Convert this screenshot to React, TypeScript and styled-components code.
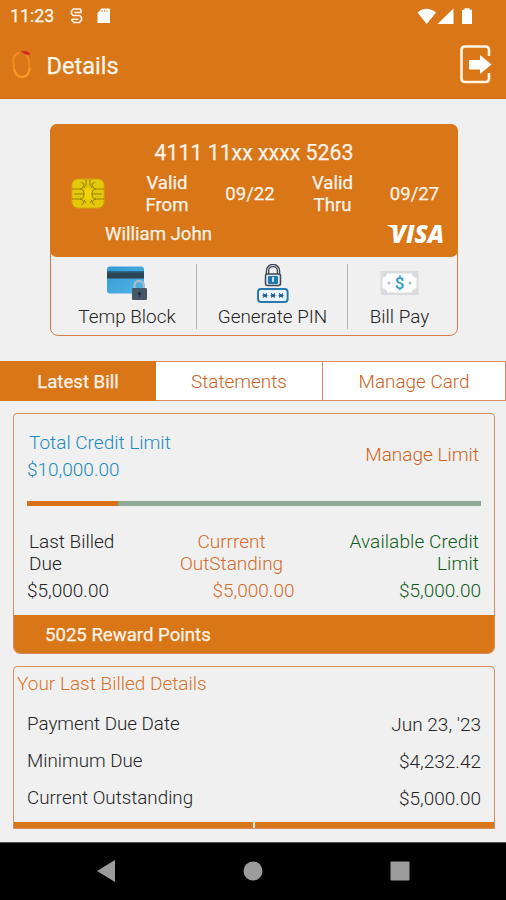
import React from "react";
import styled, { createGlobalStyle } from "styled-components";

const ORANGE = "#d97617";
const EDGE = "#d98a62";
const PAGE = "#f0f0f0";

const GlobalStyle = createGlobalStyle`
  * { box-sizing: border-box; }
  body { margin: 0; background: ${PAGE}; }
`;

const Screen = styled.div`
  width: 506px;
  height: 900px;
  display: flex;
  flex-direction: column;
  overflow: hidden;
  background: ${PAGE};
  color: #242424;
  font: 300 19px/22px Roboto, sans-serif;
  white-space: nowrap;
  svg { display: block; flex: none; }
`;

const Header = styled.header`
  height: 99px;
  flex: none;
  background: ${ORANGE};
  border-bottom: 1px solid #c4701f;
  color: #fff6ec;
  -webkit-text-stroke: 0.25px;
`;

const StatusBar = styled.div`
  height: 32px;
  display: flex;
  align-items: center;
  padding: 0 32px 0 10px;
  font-size: 17.8px;
  font-weight: 400;
`;

const StatusIcons = styled.div<{ $end?: boolean }>`
  display: flex;
  margin-left: ${(p) => (p.$end ? "auto" : "15.7px")};
`;

const TitleBar = styled.div`
  height: 66px;
  display: flex;
  align-items: center;
  padding: 0 13px 0 11px;
`;

const Title = styled.h1`
  margin: 1px auto 0 13.5px;
  font-size: 23.6px;
  font-weight: 400;
  line-height: 28px;
`;

const CardBox = styled.section`
  flex: none;
  width: 408px;
  height: 212px;
  margin: 25px 0 0 50px;
  border: 1px solid #d97e49;
  border-radius: 8px;
`;

const CardFace = styled.div`
  height: 133px;
  margin: -1px -1px 0;
  padding-top: 17px;
  border-radius: 7px;
  background: ${ORANGE};
  color: #fff3ea;
  font-size: 18.6px;
  font-weight: 400;
  -webkit-text-stroke: 0.25px;
`;

const CardNumber = styled.div`
  padding-left: 104.5px;
  font-size: 21.3px;
  line-height: 24px;
`;

const CardDates = styled.div`
  height: 43px;
  margin-top: 8px;
  display: grid;
  grid-template-columns: 79px 76px 90px 75px 89px;
  align-items: center;
  text-align: center;
  line-height: 21.5px;
  svg { margin: -2px 0 0 21px; }
`;

const CardFooter = styled.div`
  display: flex;
  justify-content: space-between;
  align-items: center;
  height: 35px;
  padding: 0 13px 0 55px;
`;

const Actions = styled.div`
  display: grid;
  grid-template-columns: 146px 151px 109px;
  padding-top: 7px;
`;

const Action = styled.button`
  height: 65px;
  padding: 0 0 0 1px;
  border: 0;
  border-right: 1px solid #b4b4b4;
  background: none;
  font: inherit;
  font-size: 18.9px;
  color: inherit;
  display: flex;
  flex-direction: column;
  align-items: center;
  gap: 1px;
  &:last-child { border: 0; padding: 0 6px 0 0; }
  &:first-child { padding-left: 7px; }
`;

const Tabs = styled.nav`
  flex: none;
  display: grid;
  grid-template-columns: 156px 167px 183px;
  height: 40px;
  margin-top: 25px;
  border: solid ${EDGE};
  border-width: 1px 0;
`;

const Tab = styled.button<{ $active?: boolean }>`
  margin: ${(p) => (p.$active ? "-1px 0" : "0")};
  padding: 2px 0 0;
  border: solid ${EDGE};
  border-width: ${(p) => (p.$active ? "0" : "0 1px 0 0")};
  background: ${(p) => (p.$active ? ORANGE : "#fff")};
  color: ${(p) => (p.$active ? "#fff3ea" : "#cc5f1c")};
  font: inherit;
  font-weight: ${(p) => (p.$active ? 400 : 300)};
  font-size: ${(p) => (p.$active ? "18.6px" : "18.9px")};
  -webkit-text-stroke: ${(p) => (p.$active ? "0.25px" : "0")};
`;

const Panel = styled.section<{ $height: number; $flat?: boolean }>`
  flex: none;
  display: flex;
  flex-direction: column;
  width: 482px;
  height: ${(p) => p.$height}px;
  margin: 12px 0 0 13px;
  border: 1px solid ${EDGE};
  border-radius: ${(p) => (p.$flat ? "4px 4px 0 0" : "4px 4px 7px 7px")};
  overflow: hidden;
`;

const LimitRow = styled.div`
  display: flex;
  justify-content: space-between;
  padding: 18px 15px 0 13px;
`;

const Limit = styled.div`
  color: #1b8bba;
  line-height: 27px;
  margin-top: -3px;
  div:first-child { padding-left: 2px; }
`;

const ManageLink = styled.a`
  color: #cf6420;
  padding-top: 12px;
`;

const Meter = styled.div`
  height: 5px;
  margin: 18px 13px 0;
  background: #8fa998;
`;

const MeterFill = styled.div`
  width: 91px;
  height: 5px;
  background: #db7016;
`;

const Columns = styled.div`
  display: grid;
  grid-template-columns: 127px 155px 172px;
  padding: 25px 13px 0;
`;

const Column = styled.div<{ $align: string; $color: string }>`
  text-align: ${(p) => p.$align};
  color: ${(p) => p.$color};
`;

const ColumnLabel = styled.div<{ $wide?: boolean }>`
  padding: 0 2px;
  letter-spacing: ${(p) => (p.$wide ? "0.1px" : "normal")};
`;

const ColumnAmount = styled.div<{ $shift?: boolean }>`
  margin-top: 5px;
  padding-left: ${(p) => (p.$shift ? "44px" : "0")};
`;

const Rewards = styled.div`
  margin: auto -1px -1px;
  height: 39px;
  padding: 0 32px;
  background: ${ORANGE};
  color: #fff3ea;
  font-size: 18.6px;
  font-weight: 400;
  line-height: 40px;
  -webkit-text-stroke: 0.25px;
`;

const DetailsTitle = styled.h2`
  margin: 6px 0 10.5px 3px;
  font: inherit;
  color: #d9722b;
`;

const DetailRow = styled.div`
  display: flex;
  justify-content: space-between;
  padding: 0 13px;
  font-size: 18.8px;
  line-height: 37.4px;
  span:last-child { font-size: 19px; }
`;

const FooterBars = styled.div`
  display: grid;
  grid-template-columns: 1fr 1fr;
  gap: 2px;
  margin: auto -1px -1px;
`;

const FooterBar = styled.div`
  height: 7px;
  background: ${ORANGE};
`;

const NavBar = styled.footer`
  margin-top: auto;
  height: 58px;
  flex: none;
  display: flex;
  align-items: center;
  justify-content: space-between;
  padding: 0 96px 2px 96px;
  background: #000;
  border-top: 1px solid #555;
`;

const StatusLeft = () => (
  <StatusIcons>
    <svg width="42" height="18" viewBox="0 0 42 18" fill="none">
      <path d="M11 6V3L10 2H3.500L1.500 4v2.500l1.500 2h7l1.500 2V13l-2 2.500H4L2 13.500V12" stroke="#fff3ea" strokeWidth="1.700" />
      <path d="M4.500 5.500H11M2 12.300h6.500" stroke="#fff3ea" strokeWidth="1.400" />
      <path d="M31.500 1.500H39a1 1 0 0 1 1 1V16H27.500V6z" fill="#fff" />
      <path d="M32 3v2M34.500 3v2M37 3v2" stroke={ORANGE} strokeWidth=".8" />
    </svg>
  </StatusIcons>
);

const StatusRight = () => (
  <StatusIcons $end>
    <svg width="57" height="18" viewBox="0 0 57 18" fill="#fff">
      <path d="M.5 5.500Q9.500-2 19 5.500L9.700 17z" />
      <path d="M36.500 1.500V17H20.500z" />
      <path d="M47.500 1.200h5v1.500h2.500V17H45V2.700h2.500z" />
    </svg>
  </StatusIcons>
);

const Logo = () => (
  <svg width="22" height="30" viewBox="0 0 22 30" fill="none" strokeLinecap="round">
    <path d="M8 3C3 4 1.500 9 2.500 13c.5 2 0 4 .5 6 1 5 4 8 8 8 6 0 8-5 7.500-10C18.500 9 17 6 14 4" stroke="#f58d1c" strokeWidth="1.900" />
    <path d="M3.500 20c1 4 4 7 7.500 7s6.500-3 7.500-8" stroke="#fa9a25" strokeWidth="2.200" />
    <path d="M11 1.500c3-.3 6 0 8 2.500-3 .8-6 .3-8-2.500z" fill="#d52332" stroke="#d52332" strokeWidth=".8" />
  </svg>
);

const ExitIcon = () => (
  <svg width="33" height="40" viewBox="0 0 33 40">
    <path d="M29 11V5Q29 1.500 25.500 1.500H5Q1.500 1.500 1.500 5V33.500Q1.500 37 5 37H25.500Q29 37 29 33.500V28" fill="none" stroke="#fff3e4" strokeWidth="2.600" />
    <path d="M10 15H20V10L31.500 19.500 20 29V24.500H10Q9 24.500 9 23.500V16Q9 15 10 15z" fill="#fff" />
  </svg>
);

const Chip = () => (
  <svg width="34" height="31" viewBox="0 0 34 31" fill="none">
    <rect x="1" y="1" width="32" height="29" rx="6" fill="#e6c80b" stroke="#d3a80b" />
    <g stroke="#94820c" strokeWidth="1">
      <path d="M1 11h8q3 0 4-4V6l-3-2M33 11h-8q-3 0-4-4V6l3-2M1 21h8q3 0 4 4l-3 2M33 21h-8q-3 0-4 4l3 2M3 16h10M31 16H21" />
      <path d="M9 11q4 0 4 5t-4 5M25 11q-4 0-4 5t4 5" />
      <path d="M15 1v6l-2 3M19 1v6l2 3M13 22l2 3M21 22l-2 3" />
    </g>
    <rect x="14" y="11" width="6" height="10" rx="2.500" fill="#f2d60a" />
  </svg>
);

const VisaText = styled.text`
  font: italic 800 24.500px "Open Sans", sans-serif;
  fill: #fff;
`;

const Visa = () => (
  <svg width="62" height="42" viewBox="0 -10 62 42">
    <path d="M4.500 2H12L13.500 10Q11 4.500 4.500 2.700z" fill="#fff" />
    <VisaText x="8" y="19.500" textLength="53" lengthAdjust="spacingAndGlyphs">VISA</VisaText>
  </svg>
);

const BlockIcon = () => (
  <svg width="42" height="41" viewBox="0 0 42 41">
    <defs>
      <linearGradient id="blue" x2="1" y2="1"><stop stopColor="#319bd3" /><stop offset="1" stopColor="#55b4e6" /></linearGradient>
    </defs>
    <rect x="1" y="2.500" width="37" height="27" rx="3" fill="url(#blue)" />
    <path d="M1 7h37v7.500H1z" fill="#2b4555" />
    <path d="M1 7h37v1.500H1z" fill="#28688e" />
    <path d="M28.500 25v-3.500a4.700 4.700 0 0 1 9.400 0V25" fill="none" stroke="#a9bdc8" strokeWidth="2.200" />
    <rect x="26" y="24" width="15" height="12" rx="1" fill="#465767" />
    <circle cx="33.500" cy="29.500" r="1.600" fill="#202d3a" />
    <path d="M33 30h1v3h-1z" fill="#202d3a" />
  </svg>
);

const PinIcon = () => (
  <svg width="34" height="41" viewBox="0 0 34 41" fill="none">
    <path d="M11.500 12V7a5.500 5.500 0 0 1 11 0V12" stroke="#3e4658" strokeWidth="3.600" />
    <path d="M11.500 12V7a5.500 5.500 0 0 1 11 0V12" stroke="#d7e0e6" strokeWidth="1" />
    <rect x="9.500" y="10" width="15" height="11.500" rx="2" fill="#deebf4" stroke="#3e4658" strokeWidth="1.500" />
    <rect x="12" y="12" width="10" height="8" rx="1" fill="#2377ad" />
    <path d="M17 13v5" stroke="#fff" strokeWidth="1.500" />
    <rect x="2" y="25" width="29.600" height="13" rx="3" fill="#eaf5fb" stroke="#2879ae" strokeWidth="2" />
    <path d="M7 29.500l4 4m0-4l-4 4M6.500 31.500h5M15 29.500l4 4m0-4l-4 4M14.500 31.500h5M23 29.500l4 4m0-4l-4 4M22.500 31.500h5" stroke="#255f91" strokeWidth="1.100" />
  </svg>
);

const DollarText = styled.text`
  font: 500 17px Roboto, sans-serif;
  fill: #2c9bd0;
`;

const BillIcon = () => (
  <svg width="40" height="41" viewBox="0 0 40 41">
    <rect x=".5" y="7" width="38" height="24" fill="#dadbdc" />
    <path d="M7 9.500h25q0 4 4.500 4v11q-4.500 0-4.500 4H7q0-4-4.500-4v-11q4.500 0 4.500-4z" fill="#fff" />
    <circle cx="9" cy="19" r="1.500" fill="#b4b9bc" />
    <circle cx="30" cy="19" r="1.500" fill="#b4b9bc" />
    <DollarText x="19.500" y="25" textAnchor="middle">$</DollarText>
  </svg>
);

const COLUMNS = [
  { lines: ["Last Billed", "Due"], align: "left", color: "#242424" },
  { lines: ["Currrent", "OutStanding"], align: "center", color: "#d76b2b" },
  { lines: ["Available Credit", "Limit"], align: "right", color: "#115c1c" },
];

const DETAILS = [
  ["Payment Due Date", "Jun 23, '23"],
  ["Minimum Due", "$4,232.42"],
  ["Current Outstanding", "$5,000.00"],
];

export default function App() {
  return (
    <Screen>
      <GlobalStyle />
      <Header>
        <StatusBar>
          11:23
          <StatusLeft />
          <StatusRight />
        </StatusBar>
        <TitleBar>
          <Logo />
          <Title>Details</Title>
          <ExitIcon />
        </TitleBar>
      </Header>

      <CardBox>
        <CardFace>
          <CardNumber>4111 11xx xxxx 5263</CardNumber>
          <CardDates>
            <Chip />
            <span>Valid<br />From</span>
            <span>09/22</span>
            <span>Valid<br />Thru</span>
            <span>09/27</span>
          </CardDates>
          <CardFooter>
            <span>William John</span>
            <Visa />
          </CardFooter>
        </CardFace>
        <Actions>
          <Action><BlockIcon />Temp Block</Action>
          <Action><PinIcon />Generate PIN</Action>
          <Action><BillIcon />Bill Pay</Action>
        </Actions>
      </CardBox>

      <Tabs>
        <Tab $active>Latest Bill</Tab>
        <Tab>Statements</Tab>
        <Tab>Manage Card</Tab>
      </Tabs>

      <Panel $height={241}>
        <LimitRow>
          <Limit>
            <div>Total Credit Limit</div>
            <div>$10,000.00</div>
          </Limit>
          <ManageLink>Manage Limit</ManageLink>
        </LimitRow>
        <Meter><MeterFill /></Meter>
        <Columns>
          {COLUMNS.map((c) => (
            <Column key={c.color} $align={c.align} $color={c.color}>
              <ColumnLabel $wide={c.align === "right"}>{c.lines[0]}<br />{c.lines[1]}</ColumnLabel>
              <ColumnAmount $shift={c.align === "center"}>$5,000.00</ColumnAmount>
            </Column>
          ))}
        </Columns>
        <Rewards>5025 Reward Points</Rewards>
      </Panel>

      <Panel $height={163} $flat>
        <DetailsTitle>Your Last Billed Details</DetailsTitle>
        {DETAILS.map(([label, value]) => (
          <DetailRow key={label}>
            <span>{label}</span>
            <span>{value}</span>
          </DetailRow>
        ))}
        <FooterBars><FooterBar /><FooterBar /></FooterBars>
      </Panel>

      <NavBar>
        <svg width="20" height="24" viewBox="0 0 20 24" fill="#9c9c9c"><path d="M19 1v22L1 12z" /></svg>
        <svg width="20" height="20" viewBox="0 0 20 20" fill="#9c9c9c"><circle cx="10" cy="10" r="9.500" /></svg>
        <svg width="20" height="20" viewBox="0 0 20 20" fill="#9c9c9c"><rect x=".5" y=".5" width="19" height="19" rx="1" /></svg>
      </NavBar>
    </Screen>
  );
}
